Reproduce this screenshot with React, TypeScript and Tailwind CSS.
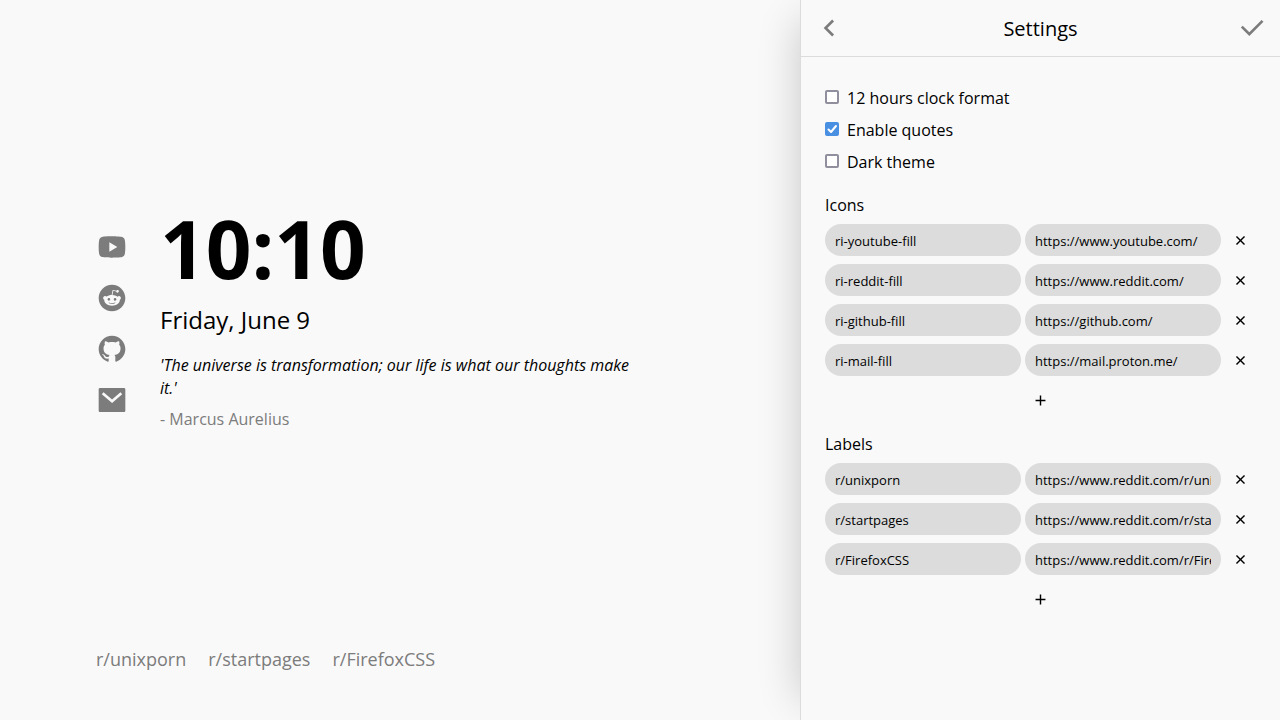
import { useState } from "react";
import type { ReactNode } from "react";
import {
  RiAddLine,
  RiArrowLeftSLine,
  RiCheckLine,
  RiCloseLine,
  RiGithubFill,
  RiMailFill,
  RiRedditFill,
  RiYoutubeFill,
} from "react-icons/ri";

type Entry = { name: string; url: string };

const initialIcons: Entry[] = [
  { name: "ri-youtube-fill", url: "https://www.youtube.com/" },
  { name: "ri-reddit-fill", url: "https://www.reddit.com/" },
  { name: "ri-github-fill", url: "https://github.com/" },
  { name: "ri-mail-fill", url: "https://mail.proton.me/" },
];

const initialLabels: Entry[] = [
  { name: "r/unixporn", url: "https://www.reddit.com/r/unixporn/" },
  { name: "r/startpages", url: "https://www.reddit.com/r/startpages/" },
  { name: "r/FirefoxCSS", url: "https://www.reddit.com/r/FirefoxCSS/" },
];

const glyphs: Record<string, ReactNode> = {
  "ri-youtube-fill": <RiYoutubeFill className="size-8" />,
  "ri-reddit-fill": <RiRedditFill className="size-8" />,
  "ri-github-fill": <RiGithubFill className="size-8" />,
  "ri-mail-fill": <RiMailFill className="size-8" />,
};

function Option({ label, checked }: { label: string; checked?: boolean }) {
  return (
    <label className="flex h-8 items-center gap-2">
      <span className="grid size-3.5">
        <input
          type="checkbox"
          defaultChecked={checked}
          className="peer col-start-1 row-start-1 size-3.5 appearance-none rounded-xs border-2 border-[#8f8f9d] bg-white checked:border-[#4a90e2] checked:bg-[#4a90e2]"
        />
        <svg
          viewBox="0 0 14 14"
          className="pointer-events-none invisible col-start-1 row-start-1 size-3.5 peer-checked:visible"
          fill="none"
          stroke="#fff"
          strokeWidth="2"
          strokeLinecap="round"
          strokeLinejoin="round"
          aria-hidden="true"
        >
          <path d="M3.5 7.5 6 10l5-6" />
        </svg>
      </span>
      <span className="pt-0.5">{label}</span>
    </label>
  );
}

function EntryList({
  title,
  entries,
  onChange,
}: {
  title: string;
  entries: Entry[];
  onChange: (next: Entry[]) => void;
}) {
  const update = (index: number, patch: Partial<Entry>) =>
    onChange(entries.map((e, i) => (i === index ? { ...e, ...patch } : e)));
  const field =
    "h-8 min-w-0 flex-1 rounded-full bg-[#dcdcdc] px-2.5 pt-0.5 text-[13px] outline-none";

  return (
    <section className="mt-4">
      <h2 className="leading-[25px]">{title}</h2>
      <ul className="mt-1.5 flex flex-col gap-2">
        {entries.map((entry, i) => (
          <li key={i} className="flex gap-1">
            <input
              type="text"
              aria-label={`${title} name ${i + 1}`}
              value={entry.name}
              onChange={(e) => update(i, { name: e.target.value })}
              className={field}
            />
            <input
              type="text"
              aria-label={`${title} address ${i + 1}`}
              value={entry.url}
              onChange={(e) => update(i, { url: e.target.value })}
              className={field}
            />
            <button
              type="button"
              aria-label={`Remove ${entry.name}`}
              onClick={() => onChange(entries.filter((_, n) => n !== i))}
              className="flex w-[31px] items-center justify-center"
            >
              <RiCloseLine className="size-[17px]" />
            </button>
          </li>
        ))}
      </ul>
      <button
        type="button"
        aria-label={`Add to ${title}`}
        onClick={() => onChange([...entries, { name: "", url: "" }])}
        className="mt-2 flex h-8 w-full items-center justify-center"
      >
        <RiAddLine className="size-[17px]" />
      </button>
    </section>
  );
}

export default function App() {
  const [icons, setIcons] = useState(initialIcons);
  const [labels, setLabels] = useState(initialLabels);

  return (
    <div className="flex min-h-screen overflow-hidden bg-[#f9f9f9] font-['Open_Sans',sans-serif] text-base text-black">
      <main className="flex min-w-0 flex-1 flex-col px-24">
        <div className="flex flex-1 items-center gap-8">
          <nav aria-label="Sites" className="flex flex-col gap-[19px] text-[#7c7c7c]">
            {icons.map((icon, i) => (
              <a key={i} href={icon.url} aria-label={icon.name}>
                {glyphs[icon.name]}
              </a>
            ))}
          </nav>
          <div className="max-w-[480px] pb-[7px]">
            <h1 className="text-[80px] leading-[80px] font-bold">10:10</h1>
            <p className="mt-4 text-2xl leading-8">Friday, June 9</p>
            <p className="mt-[18px] leading-[23px] italic">
              'The universe is transformation; our life is what our thoughts make it.'
            </p>
            <p className="mt-2 leading-[23px] text-[#7c7c7c]">- Marcus Aurelius</p>
          </div>
        </div>
        <footer className="flex gap-[22px] pb-12 text-lg leading-[26px] text-[#7c7c7c]">
          {labels.map((label, i) => (
            <a key={i} href={label.url}>
              {label.name}
            </a>
          ))}
        </footer>
      </main>

      <aside className="w-[480px] shrink-0 border-l border-[#dcdcdc] bg-[#f9f9f9] shadow-[-20px_0_40px_-20px_rgba(0,0,0,0.2)]">
        <header className="flex h-[57px] items-center justify-between border-b border-[#dcdcdc] px-3">
          <button type="button" aria-label="Back" className="text-[#7c7c7c]">
            <RiArrowLeftSLine className="size-8" />
          </button>
          <h2 className="pt-0.5 text-xl">Settings</h2>
          <button type="button" aria-label="Save" className="text-[#7c7c7c]">
            <RiCheckLine className="size-8" />
          </button>
        </header>
        <div className="p-6">
          <Option label="12 hours clock format" />
          <Option label="Enable quotes" checked />
          <Option label="Dark theme" />
          <EntryList title="Icons" entries={icons} onChange={setIcons} />
          <EntryList title="Labels" entries={labels} onChange={setLabels} />
        </div>
      </aside>
    </div>
  );
}
